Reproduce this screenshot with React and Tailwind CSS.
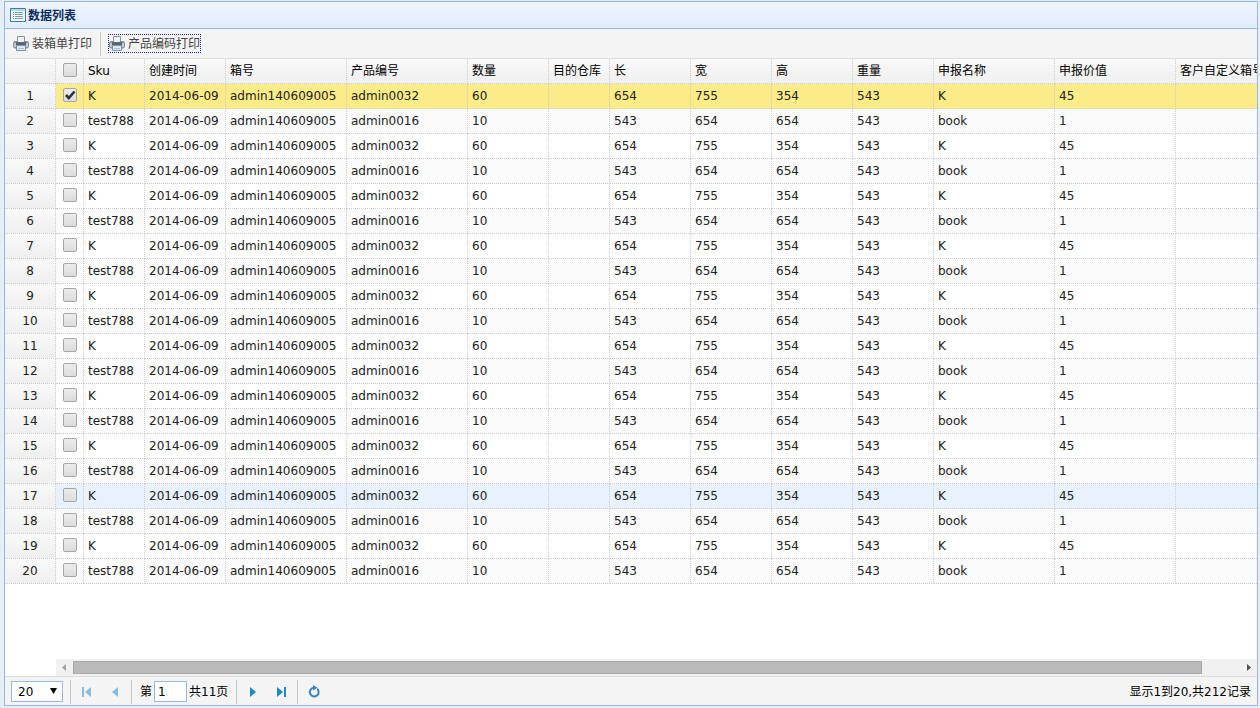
import React, { useState } from 'react';

const columns = [
  { title: 'Sku', width: 61 },
  { title: '创建时间', width: 81 },
  { title: '箱号', width: 121 },
  { title: '产品编号', width: 121 },
  { title: '数量', width: 81 },
  { title: '目的仓库', width: 61 },
  { title: '长', width: 81 },
  { title: '宽', width: 81 },
  { title: '高', width: 81 },
  { title: '重量', width: 81 },
  { title: '申报名称', width: 121 },
  { title: '申报价值', width: 121 },
  { title: '客户自定义箱号', width: 121 },
];

const itemK = ['K', '2014-06-09', 'admin140609005', 'admin0032', '60', '', '654', '755', '354', '543', 'K', '45', ''];
const itemBook = ['test788', '2014-06-09', 'admin140609005', 'admin0016', '10', '', '543', '654', '654', '543', 'book', '1', ''];
const rows = Array.from({ length: 20 }, (_, i) => (i % 2 === 0 ? itemK : itemBook));

function PrinterIcon() {
  return (
    <svg width="16" height="16" viewBox="0 0 16 16" aria-hidden="true">
      <path d="M1.500 5h13l1.500 1.500V11l-1.500 1.500h-13L0 11V6.500z" fill="#8b939b" />
      <path d="M1 7h2v4H1zM13 7h2v4h-2z" fill="#c3c9cd" />
      <path d="M4.500.5h7v6h-7z" fill="#eef3f8" stroke="#8494a5" />
      <path d="M3 6h10v3.500H3z" fill="#5d666d" />
      <path d="M3.500 9.500h9v5h-9z" fill="#dbeaf6" stroke="#7593ae" />
      <path d="M5 12.500h6" stroke="#a3c1dc" />
    </svg>
  );
}

function ListIcon() {
  return (
    <svg width="16" height="16" viewBox="0 0 16 16" aria-hidden="true">
      <path d="M.5 1.500h15v13H.5z" fill="#f4fbff" stroke="#3f7da3" />
      <path d="M1 2h14v2H1z" fill="#b0d8ee" />
      <path d="M3 5.500h1M3 7.500h1M3 9.500h1M3 11.500h1" stroke="#3f7fa8" />
      <path d="M5 5.500h8M5 7.500h8M5 9.500h8M5 11.500h8" stroke="#7e9aab" />
    </svg>
  );
}

function Check({ checked, onChange, label }) {
  return (
    <label className="relative mx-auto block h-3.5 w-3.5">
      <input
        type="checkbox"
        aria-label={label}
        checked={checked}
        onChange={onChange}
        className="block h-3.5 w-3.5 appearance-none rounded-[2px] border border-[#a6a6a6] bg-linear-to-b from-[#ececec] to-[#dcdcdc]"
      />
      {checked && (
        <svg className="pointer-events-none absolute inset-0" width="14" height="14" viewBox="0 0 14 14" aria-hidden="true">
          <path d="M3 7l2.800 3L11.500 3.500" fill="none" stroke="#2f333b" strokeWidth="2.600" />
        </svg>
      )}
    </label>
  );
}

function PagerButton({ label, disabled, children }) {
  return (
    <button type="button" aria-label={label} disabled={disabled} className="flex h-6 w-7 items-center justify-center disabled:opacity-50">
      <svg width="16" height="16" viewBox="0 0 16 16" fill="#1c87c9" aria-hidden="true">{children}</svg>
    </button>
  );
}

function Separator() {
  return <span className="h-6 w-px bg-[#c4c4c4]" />;
}

const cell = 'h-[25px] overflow-hidden border-r border-b border-dotted border-[#ccc] font-normal whitespace-nowrap';

export default function App() {
  const [selected, setSelected] = useState([0]);
  const toggle = (i) => setSelected((s) => (s.includes(i) ? s.filter((n) => n !== i) : [...s, i]));
  const all = selected.length === rows.length;

  return (
    <div className="flex h-screen bg-[#e6eefb] font-['DejaVu_Sans','Noto_Sans_CJK_SC',sans-serif] text-xs text-[#222]">
      <main className="mt-px mr-0.5 mb-0.5 ml-1 flex min-w-0 flex-1 flex-col border border-[#95b8e7] bg-white">
        <header className="flex h-[27px] shrink-0 items-center gap-0.5 border-b border-[#95b8e7] bg-linear-to-b from-[#eff5ff] to-[#e0ecff] px-[5px]">
          <ListIcon />
          <h1 className="pt-0.5 text-xs font-bold text-[#0e2d5f]">数据列表</h1>
        </header>

        <div className="flex h-[29px] shrink-0 items-center bg-[#f4f4f4] px-2 text-[#444]">
          <button type="button" className="flex items-center gap-[3px]"><PrinterIcon />装箱单打印</button>
          <span className="mr-[7px] ml-2 h-6 w-px bg-[#ccc]" />
          <button type="button" className="flex h-[19px] items-center gap-[3px] border border-dotted border-[#2222cc]"><PrinterIcon />产品编码打印</button>
        </div>

        <div className="min-h-0 flex-1 overflow-hidden border-t border-[#ddd]">
          <table className="w-[1292px] table-fixed border-separate border-spacing-0">
            <colgroup>
              <col className="w-[51px]" />
              <col className="w-7" />
              {columns.map((c) => <col key={c.title} style={{ width: c.width }} />)}
            </colgroup>
            <thead>
              <tr className="bg-linear-to-b from-[#f9f9f9] to-[#efefef] text-black">
                <td className={`${cell} p-0`} />
                <th className={`${cell} p-0 pb-0.5`}>
                  <Check label="全选" checked={all} onChange={() => setSelected(all ? [] : rows.map((_, i) => i))} />
                </th>
                {columns.map((c) => (
                  <th key={c.title} scope="col" className={`${cell} p-0 pl-1 text-left`}>{c.title}</th>
                ))}
              </tr>
            </thead>
            <tbody>
              {rows.map((row, i) => {
                const tone = selected.includes(i) ? 'bg-[#fbec88]' : i === 16 ? 'bg-[#e8f2fe]' : i % 2 ? 'bg-[#fafafa]' : 'bg-white';
                return (
                  <tr key={i} className={tone}>
                    <td className={`${cell} bg-linear-to-b from-[#f9f9f9] to-[#efefef] p-0 text-center`}>{i + 1}</td>
                    <td className={`${cell} p-0 pb-0.5`}>
                      <Check label={`选择第${i + 1}行`} checked={selected.includes(i)} onChange={() => toggle(i)} />
                    </td>
                    {row.map((value, j) => <td key={j} className={`${cell} p-0 pl-1`}>{value}</td>)}
                  </tr>
                );
              })}
            </tbody>
          </table>
        </div>

        <div className="ml-[51px] flex h-[17px] shrink-0 items-center bg-[#f1f1f1]">
          <svg width="17" height="17" viewBox="0 0 17 17" aria-hidden="true"><path d="M10 5v7L6 8.500z" fill="#a3a3a3" /></svg>
          <div className="h-[13px] flex-[1129] border border-[#a8a8a8] bg-[#bababa]" />
          <div className="flex-[38]" />
          <svg width="17" height="17" viewBox="0 0 17 17" aria-hidden="true"><path d="M7 5v7l4-3.500z" fill="#505050" /></svg>
        </div>

        <footer className="flex h-[29px] shrink-0 items-center justify-between border-t border-[#ddd] bg-[#f4f4f4] px-1.5 pt-px text-black">
          <div className="flex items-center">
            <div className="relative mr-[7px]">
              <select aria-label="每页记录数" defaultValue="20" className="block h-[21px] w-[52px] appearance-none border border-[#95b8e7] bg-white pl-1.5">
                <option>10</option>
                <option>20</option>
                <option>50</option>
              </select>
              <svg className="pointer-events-none absolute top-[7px] right-1.5" width="7" height="6" viewBox="0 0 7 6" aria-hidden="true"><path d="M0 0h7L3.500 6z" fill="#000" /></svg>
            </div>
            <Separator />
            <div className="flex px-0.5">
              <PagerButton label="首页" disabled><path d="M3 3h2v10H3zM12 3v10L6 8z" /></PagerButton>
              <PagerButton label="上一页" disabled><path d="M11 3v10L5 8z" /></PagerButton>
            </div>
            <Separator />
            <label className="ml-2 flex items-center">
              第
              <input type="text" defaultValue="1" className="ml-0.5 h-[21px] w-[33px] border border-[#95b8e7] bg-white px-[3px]" />
            </label>
            <span className="mr-2 ml-0.5">共11页</span>
            <Separator />
            <div className="flex px-0.5">
              <PagerButton label="下一页"><path d="M5 3v10l6-5z" /></PagerButton>
              <PagerButton label="末页"><path d="M4 3v10l6-5zM11 3h2v10h-2z" /></PagerButton>
            </div>
            <Separator />
            <div className="flex px-0.5">
              <PagerButton label="刷新">
                <path d="M11.200 4.800A4.400 4.400 0 1 1 7.500 3.700" fill="none" stroke="#3a84bd" strokeWidth="2" />
                <path d="M7 1l4.500 2.700L7 6.500z" fill="#3a84bd" />
              </PagerButton>
            </div>
          </div>
          <p>显示1到20,共212记录</p>
        </footer>
      </main>
    </div>
  );
}
